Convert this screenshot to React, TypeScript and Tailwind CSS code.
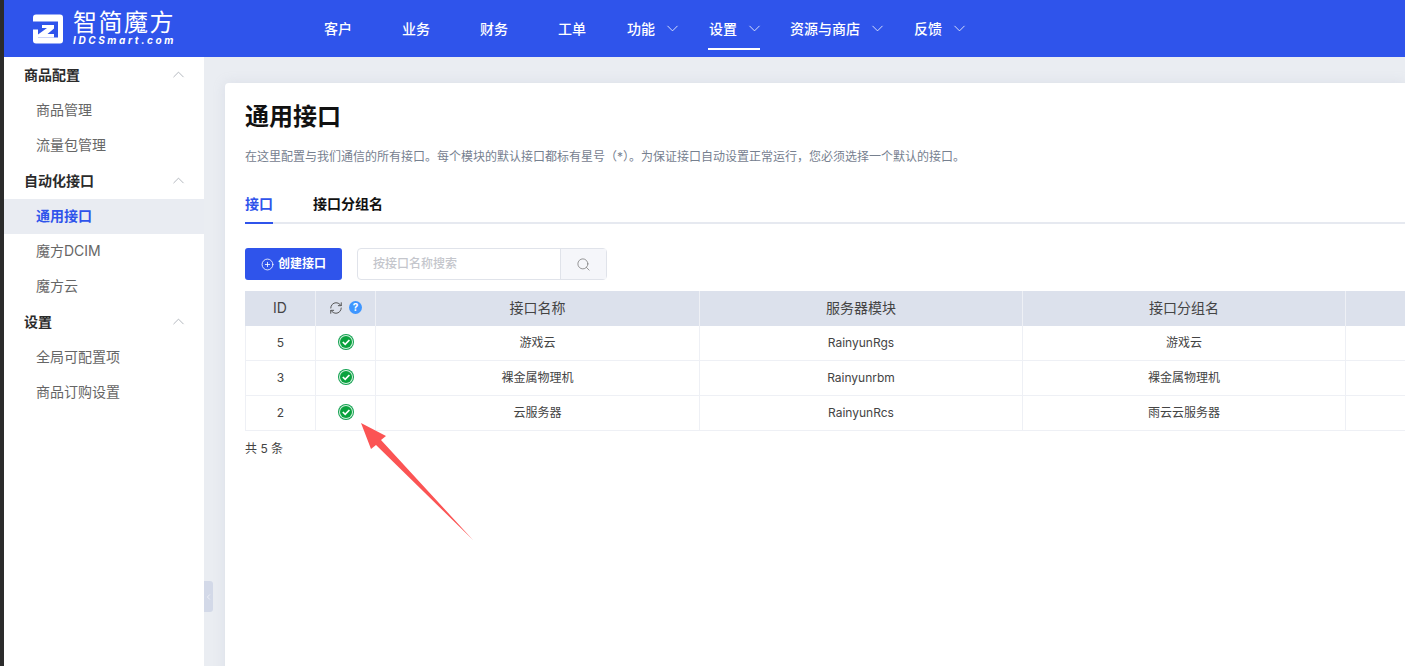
import { ChevronDown, ChevronLeft, ChevronUp, CirclePlus, RefreshCw, Search } from 'lucide-react'

const font = "font-['Inter','Noto_Sans_CJK_SC',sans-serif]"

const navItems = [
    { label: '客户', cls: 'w-[78px]' },
    { label: '业务', cls: 'w-[78px]' },
    { label: '财务', cls: 'w-[78px]' },
    { label: '工单', cls: 'w-[69px]' },
]

const rows = [
    ['5', '游戏云', 'RainyunRgs', '游戏云'],
    ['3', '裸金属物理机', 'Rainyunrbm', '裸金属物理机'],
    ['2', '云服务器', 'RainyunRcs', '雨云云服务器'],
]

function Logo() {
    return (
        <div className="flex items-center gap-[9px] pl-[29px] w-[320px] shrink-0 text-white">
            <svg width="31" height="30" viewBox="0 0 31 30" className="shrink-0">
                <rect x="0" y="0.5" width="30" height="29" rx="3" fill="#fff" />
                <path d="M0 7.500H25V23.500H5V15.500H0Z" fill="#2f54eb" />
                <path d="M9 11H21V14.500L14.500 20H21V23.500H5V20.500L14 14H9Z" fill="#fff" />
            </svg>
            <div className="flex flex-col pb-[3px]">
                <span className="text-[24px] leading-[25px] tracking-[1.5px] font-normal">智简魔方</span>
                <span className="text-[10px] leading-[10px] tracking-[2.6px] font-bold italic">IDCSmart.com</span>
            </div>
        </div>
    )
}

function Arrow() {
    return (
        <svg width="130" height="130" viewBox="0 0 130 130" className="absolute left-[355px] top-[415px]">
            <path d="M6 8L31 21L26 25L118 125L21 30L16 34Z" fill="#fb5454" />
        </svg>
    )
}

function NavLink({ label, active }: { label: string; active?: boolean }) {
    return (
        <div className="relative flex h-full items-center text-sm font-medium">
            <span>{label}</span>
            <ChevronDown size={19} strokeWidth={1.2} className="ml-[8px] opacity-85" />
            {active && <div className="absolute left-[-1px] right-[4px] bottom-[7px] h-[2px] bg-white" />}
        </div>
    )
}

function Header() {
    return (
        <header className="flex h-[57px] shrink-0 items-center bg-[#2f54eb] text-white">
            <Logo />
            {navItems.map((item) => (
                <div key={item.label} className={`${item.cls} text-sm font-medium shrink-0`}>{item.label}</div>
            ))}
            <div className="flex h-full w-[82px] shrink-0"><NavLink label="功能" /></div>
            <div className="flex h-full w-[81px] shrink-0"><NavLink label="设置" active /></div>
            <div className="flex h-full w-[124px] shrink-0"><NavLink label="资源与商店" /></div>
            <div className="flex h-full shrink-0"><NavLink label="反馈" /></div>
        </header>
    )
}

function SideGroup({ title, items }: { title: string; items: string[] }) {
    return (
        <div className="pb-[1px]">
            <div className="flex h-[35px] items-center justify-between pb-[2px] pl-[20px] pr-[16px] text-sm font-semibold text-[#2b2b2b]">
                <span>{title}</span>
                <ChevronUp size={19} strokeWidth={1.1} className="text-[#a9adb5]" />
            </div>
            {items.map((item) => (
                <div
                    key={item}
                    className={
                        item === '通用接口'
                            ? 'flex h-[35px] items-center bg-[#e9ecf2] pb-[2px] pl-[32px] text-sm font-semibold text-[#2f54eb]'
                            : 'flex h-[35px] items-center pb-[2px] pl-[32px] text-sm text-[#666666]'
                    }
                >
                    {item}
                </div>
            ))}
        </div>
    )
}

function Sidebar() {
    return (
        <aside className="w-[200px] shrink-0 bg-white pt-[1px]">
            <SideGroup title="商品配置" items={['商品管理', '流量包管理']} />
            <SideGroup title="自动化接口" items={['通用接口', '魔方DCIM', '魔方云']} />
            <SideGroup title="设置" items={['全局可配置项', '商品订购设置']} />
        </aside>
    )
}

function OkIcon() {
    return (
        <svg width="16" height="16" viewBox="0 0 16 16" className="mx-auto">
            <circle cx="8" cy="8" r="8" fill="#12a150" />
            <circle cx="8" cy="8" r="7" fill="#d4f0de" />
            <circle cx="8" cy="8" r="6" fill="#0aa23e" />
            <path d="M4.800 8L7.200 10.300L11.400 6" fill="none" stroke="#fff" strokeWidth="1.700" />
        </svg>
    )
}

function InterfaceTable() {
    return (
        <div className="w-[1240px]">
            <div className="grid grid-cols-[71px_60px_324px_323px_323px_139px] h-[35px] bg-[#dce1ec] pb-[2px] text-sm text-[#444444]">
                <div className="flex items-center justify-center border-r border-[#eef0f5] -mb-[2px] pb-[2px]">ID</div>
                <div className="flex items-center justify-center gap-[6px] border-r border-[#eef0f5] -mb-[2px] pb-[2px]">
                    <RefreshCw size={14} strokeWidth={1.7} className="text-[#555555]" />
                    <span className="flex h-[13px] w-[13px] items-center justify-center rounded-full bg-[#3e96ff] text-[10px] font-bold text-white">?</span>
                </div>
                <div className="flex items-center justify-center border-r border-[#eef0f5] -mb-[2px] pb-[2px]">接口名称</div>
                <div className="flex items-center justify-center border-r border-[#eef0f5] -mb-[2px] pb-[2px]">服务器模块</div>
                <div className="flex items-center justify-center border-r border-[#eef0f5] -mb-[2px] pb-[2px]">接口分组名</div>
                <div />
            </div>
            {rows.map((row) => (
                <div key={row[0]} className="grid grid-cols-[71px_60px_324px_323px_323px_139px] h-[35px] border-b border-[#eef0f5] text-xs text-[#444444]">
                    <div className="flex items-center justify-center border-x border-[#eef0f5]">{row[0]}</div>
                    <div className="flex items-center border-r border-[#eef0f5] pb-[3px]"><OkIcon /></div>
                    <div className="flex items-center justify-center border-r border-[#eef0f5]">{row[1]}</div>
                    <div className="flex items-center justify-center border-r border-[#eef0f5]">{row[2]}</div>
                    <div className="flex items-center justify-center border-r border-[#eef0f5]">{row[3]}</div>
                    <div />
                </div>
            ))}
        </div>
    )
}

export default function App() {
    return (
        <div className={`relative flex h-screen w-screen overflow-hidden bg-[#2b2b2b] pl-[4px] ${font}`}>
            <div className="flex min-w-0 flex-1 flex-col">
                <Header />
                <div className="flex min-h-0 flex-1 bg-[#eaedf2]">
                    <Sidebar />
                    <div className="relative flex-1 min-w-0 pl-[21px] pt-[26px]">
                        <div className="absolute left-0 top-[524px] flex h-[31px] w-[9px] items-center justify-center rounded-r-[3px] bg-[#d3d9e8]">
                            <ChevronLeft size={12} strokeWidth={1.5} className="text-white" />
                        </div>
                        <main className="h-[620px] rounded-tl-[4px] bg-white pl-[20px] pt-[17px] shadow-[0_0_12px_rgba(170,180,205,0.25)]">
                            <h1 className="text-2xl leading-[34px] font-semibold text-[#111111]">通用接口</h1>
                            <p className="mt-[15px] text-xs leading-[16px] text-[#76808f]">
                                在这里配置与我们通信的所有接口。每个模块的默认接口都标有星号（*）。为保证接口自动设置正常运行，您必须选择一个默认的接口。
                            </p>
                            <div className="mt-[25px] flex h-[34px] gap-[40px] border-b-2 border-[#e6e9f0] text-sm font-semibold">
                                <div className="h-[34px] border-b-2 border-[#2f54eb] pt-[4px] text-[#2f54eb]">接口</div>
                                <div className="pt-[4px] text-[#111111]">接口分组名</div>
                            </div>
                            <div className="mt-[24px] flex h-[32px]">
                                <button className="flex w-[97px] items-center justify-center gap-[4px] rounded-[3px] bg-[#2f54eb] text-xs font-semibold text-white">
                                    <CirclePlus size={13} strokeWidth={1.5} />
                                    创建接口
                                </button>
                                <div className="ml-[15px] flex w-[250px] rounded-[4px] border border-[#e0e3ea]">
                                    <div className="flex flex-1 items-center pl-[15px] text-xs font-medium text-[#c4c6cc]">按接口名称搜索</div>
                                    <div className="flex w-[46px] items-center justify-center border-l border-[#e0e3ea] bg-[#f5f6fa]">
                                        <Search size={15} strokeWidth={1.2} className="text-[#777777]" />
                                    </div>
                                </div>
                            </div>
                            <div className="mt-[11px]"><InterfaceTable /></div>
                            <div className="mt-[10px] text-xs text-[#444444]">共 5 条</div>
                        </main>
                    </div>
                </div>
            </div>
            <Arrow />
        </div>
    )
}
